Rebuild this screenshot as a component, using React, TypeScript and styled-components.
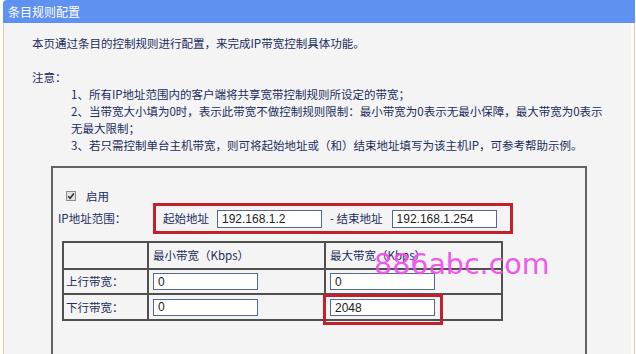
import styled, { createGlobalStyle } from "styled-components";

const Global = createGlobalStyle`
  body {
    margin: 0;
    background: #fff;
    font-family: "Noto Sans CJK SC", "DejaVu Sans", sans-serif;
  }
`;

const Page = styled.div`
  position: relative;
  margin-left: 3px;
  width: 632px;
  height: 354px;
  display: flex;
  flex-direction: column;
  overflow: hidden;
`;

const Header = styled.div`
  height: 23px;
  line-height: 23px;
  padding-left: 5px;
  background: #5f91f3;
  border-top-left-radius: 4px;
  color: #fff;
  font-size: 12px;
`;

const Body = styled.div`
  flex: 1;
  padding: 12px 0 0 28px;
  background: #f4f4f4;
  border-left: 1px solid #e3cb98;
  border-right: 1px solid #efc8a4;
  box-shadow: inset -3px 0 0 #fafafa;
  color: #1b2c60;
  font-size: 11.5px;
  line-height: 17px;
`;

const Line = styled.div<{ $indent?: number; $gap?: number }>`
  margin-left: ${(p) => p.$indent ?? 0}px;
  margin-top: ${(p) => p.$gap ?? 0}px;
  white-space: nowrap;
`;

const Box = styled.div`
  margin: 12px 0 0 19px;
  width: 532px;
  height: 180px;
  border: 2px solid #626262;
  padding-top: 21px;
`;

const CheckRow = styled.div`
  display: flex;
  align-items: center;
  height: 14px;
  padding-left: 13px;
  gap: 10px;
`;

const IpRow = styled.div`
  display: flex;
  align-items: center;
  padding-left: 5px;
`;

const Label = styled.span<{ $w?: number }>`
  width: ${(p) => (p.$w ? `${p.$w}px` : "auto")};
  white-space: nowrap;
`;

const RedFrame = styled.div`
  display: flex;
  align-items: center;
  width: 360px;
  height: 31px;
  box-sizing: border-box;
  border: 3px solid #c51f2b;
  padding-left: 7px;
`;

const Field = styled.input<{ $w?: number; $h?: number }>`
  box-sizing: border-box;
  width: ${(p) => p.$w ?? 105}px;
  height: ${(p) => p.$h ?? 17}px;
  margin: 0;
  padding: 0 0 0 4px;
  border: 1px solid #56698a;
  background: #fff;
  color: #222;
  font-family: "Liberation Sans", Arial, sans-serif;
  font-size: 12px;
  outline: none;
`;

const Spacer = styled.span<{ $w: number }>`
  width: ${(p) => p.$w}px;
  flex: none;
`;

const Table = styled.table`
  margin: 7px 0 0 9px;
  width: 439px;
  border-collapse: collapse;
  table-layout: fixed;
  border: 2px solid #505050;
  td {
    border: 2px solid #505050;
    padding: 0 0 0 4px;
    vertical-align: middle;
    white-space: nowrap;
  }
  td:first-child {
    padding-left: 2px;
  }
`;

const Row = styled.tr<{ $h: number }>`
  height: ${(p) => p.$h}px;
`;

const Holder = styled.span`
  position: relative;
  display: inline-block;
  vertical-align: middle;
`;

const Highlight = styled.span`
  position: absolute;
  left: -7px;
  right: -8px;
  top: -5px;
  bottom: -9px;
  border: 3px solid #c51f2b;
  pointer-events: none;
`;

// watermark stamped over the screenshot
const Watermark = styled.div`
  position: absolute;
  left: 371px;
  top: 251px;
  font-family: "DejaVu Sans", sans-serif;
  font-size: 28.5px;
  line-height: 28px;
  color: #ef4cef;
  opacity: 0.92;
  pointer-events: none;
`;

function Check() {
  return (
    <svg width="10" height="10" viewBox="0 0 10 10">
      <rect x="0.5" y="0.5" width="9" height="9" fill="#e2e2e2" stroke="#8d8d8d" />
      <path d="M2.2 5.2 L4.1 7.2 L7.9 2.6" fill="none" stroke="#333" strokeWidth="1.6" />
    </svg>
  );
}

export default function App() {
  return (
    <>
      <Global />
      <Page>
        <Header>条目规则配置</Header>
        <Body>
          <Line>本页通过条目的控制规则进行配置，来完成IP带宽控制具体功能。</Line>
          <Line $gap={17}>注意：</Line>
          <Line $indent={39}>1、所有IP地址范围内的客户端将共享宽带控制规则所设定的带宽；</Line>
          <Line $indent={39}>
            2、当带宽大小填为0时，表示此带宽不做控制规则限制：最小带宽为0表示无最小保障，最大带宽为0表示
          </Line>
          <Line $indent={39}>无最大限制；</Line>
          <Line $indent={39}>
            3、若只需控制单台主机带宽，则可将起始地址或（和）结束地址填写为该主机IP，可参考帮助示例。
          </Line>
          <Box>
            <CheckRow>
              <Check />
              <Label>启用</Label>
            </CheckRow>
            <IpRow>
              <Label $w={95}>IP地址范围：</Label>
              <RedFrame>
                <Label>起始地址</Label>
                <Spacer $w={8} />
                <Field $h={18} defaultValue="192.168.1.2" />
                <Spacer $w={8} />
                <Label>- 结束地址</Label>
                <Spacer $w={9} />
                <Field $h={18} defaultValue="192.168.1.254" />
              </RedFrame>
            </IpRow>
            <Table>
              <colgroup>
                <col style={{ width: 85 }} />
                <col style={{ width: 177 }} />
                <col style={{ width: 177 }} />
              </colgroup>
              <tbody>
                <Row $h={27}>
                  <td></td>
                  <td>最小带宽（Kbps）</td>
                  <td>最大带宽（Kbps）</td>
                </Row>
                <Row $h={25}>
                  <td>上行带宽：</td>
                  <td>
                    <Field defaultValue="0" />
                  </td>
                  <td>
                    <Field defaultValue="0" />
                  </td>
                </Row>
                <Row $h={26}>
                  <td>下行带宽：</td>
                  <td>
                    <Field defaultValue="0" />
                  </td>
                  <td>
                    <Holder>
                      <Field defaultValue="2048" />
                      <Highlight />
                    </Holder>
                  </td>
                </Row>
              </tbody>
            </Table>
          </Box>
        </Body>
        <Watermark>886abc.com</Watermark>
      </Page>
    </>
  );
}
